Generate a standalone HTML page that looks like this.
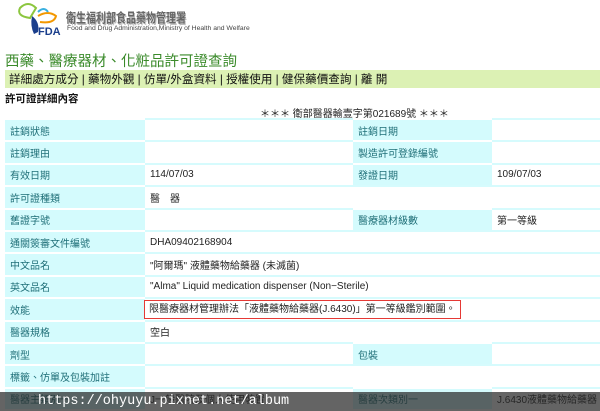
<!DOCTYPE html><html><head><meta charset="utf-8"><style>
body{margin:0;width:600px;height:411px;overflow:hidden;background:#fff;font-family:"Liberation Sans","Noto Sans CJK TC",sans-serif;position:relative}
.a{position:absolute;white-space:nowrap}
table{position:absolute;left:5px;top:118px;border-collapse:collapse;width:595px;table-layout:fixed}
td{height:20.4px;border-top:2px solid #d6fbfd;padding:0 0 0 5px;font-size:10px;color:#222;white-space:nowrap;overflow:visible}
td.l{background:#d4fbfd;color:#1f6f78;border-top-color:#fff}
</style></head><body>
<svg class="a" style="left:8px;top:2px" width="60" height="34" viewBox="0 0 60 34">
<path d="M28 6 Q20 -2 12 6 Q8 14 22 16 Z" fill="none" stroke="#8cc63f" stroke-width="2"/>
<path d="M30 14 Q40 8 48 14 Q46 22 32 20" fill="none" stroke="#f39800" stroke-width="2"/>
<path d="M30 10 Q36 4 40 10" fill="none" stroke="#3ab0e0" stroke-width="2"/>
<path d="M24 14 Q32 20 30 30 L26 32 Q22 24 24 14Z" fill="#1a3e8c"/>
<text x="30" y="33" font-size="11" font-weight="bold" fill="#1a3e8c" font-family="Liberation Sans">FDA</text>
</svg>
<div class="a" style="left:66px;top:7px;font-size:10px;font-weight:bold;color:#666;transform:scaleY(1.3);transform-origin:0 0;text-shadow:1px 1px 0 #bbb">衛生福利部食品藥物管理署</div>
<div class="a" style="left:67px;top:25px;font-size:6.8px;color:#444">Food and Drug Administration,Ministry of Health and Welfare</div>
<div class="a" style="left:5px;top:50px;font-size:14.5px;color:#3a8a2a">西藥、醫療器材、化粧品許可證查詢</div>
<div class="a" style="left:5px;top:70px;width:595px;height:18px;background:#dcf1b4"></div>
<div class="a" style="left:9px;top:71px;font-size:11.6px;color:#111">詳細處方成分 | 藥物外觀 | 仿單/外盒資料 | 授權使用 | 健保藥價查詢 | 離 開</div>
<div class="a" style="left:5px;top:91px;font-size:10.5px;font-weight:bold;color:#111">許可證詳細內容</div>
<div class="a" style="left:260px;top:105px;font-size:10px;color:#222">＊＊＊ 衛部醫器輸壹字第021689號 ＊＊＊</div>
<table>
<colgroup><col style="width:140px"><col style="width:208px"><col style="width:139px"><col></colgroup>
<tr><td class="l">註銷狀態</td><td></td><td class="l">註銷日期</td><td></td></tr>
<tr><td class="l">註銷理由</td><td></td><td class="l">製造許可登錄編號</td><td></td></tr>
<tr><td class="l">有效日期</td><td>114/07/03</td><td class="l">發證日期</td><td>109/07/03</td></tr>
<tr><td class="l">許可證種類</td><td>醫　器</td><td></td><td></td></tr>
<tr><td class="l">舊證字號</td><td></td><td class="l">醫療器材級數</td><td>第一等級</td></tr>
<tr><td class="l">通關簽審文件編號</td><td>DHA09402168904</td><td></td><td></td></tr>
<tr><td class="l">中文品名</td><td colspan="3">"阿爾瑪" 液體藥物給藥器 (未滅菌)</td></tr>
<tr><td class="l">英文品名</td><td colspan="3">"Alma" Liquid medication dispenser (Non−Sterile)</td></tr>
<tr><td class="l">效能</td><td colspan="3" style="position:relative"><span style="position:absolute;left:-1px;top:1px;height:17px;line-height:17px;padding:0 4px;border:1px solid #e53935">限醫療器材管理辦法「液體藥物給藥器(J.6430)」第一等級鑑別範圍。</span></td></tr>
<tr><td class="l">醫器規格</td><td colspan="3">空白</td></tr>
<tr><td class="l">劑型</td><td></td><td class="l">包裝</td><td></td></tr>
<tr><td class="l">標籤、仿單及包裝加註</td><td colspan="3"></td></tr>
<tr><td class="l">醫器主類別一</td><td>J一般醫院及個人使用裝置</td><td class="l">醫器次類別一</td><td>J.6430液體藥物給藥器</td></tr>
</table>
<div class="a" style="left:0;top:392px;width:600px;height:19px;background:rgba(40,40,40,0.72)"></div>
<div class="a" style="left:38px;top:394px;font-family:'Liberation Mono',monospace;font-size:13.5px;color:#fff">https://ohyuyu.pixnet.net/album</div>
</body></html>
